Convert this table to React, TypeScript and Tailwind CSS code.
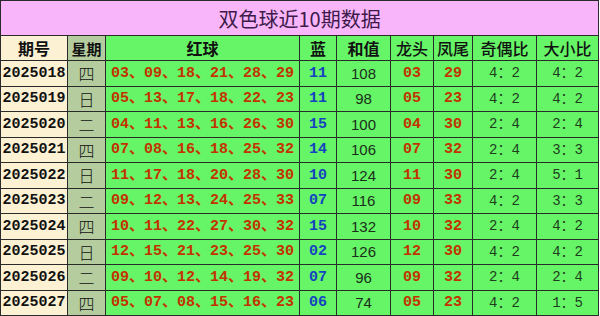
import React from "react";

type Row = {
  qi: string;
  day: string;
  red: string[];
  blue: string;
  sum: number;
  head: string;
  tail: string;
  oe: string;
  bs: string;
};

const rows: Row[] = [
  { qi: "2025018", day: "四", red: ["03", "09", "18", "21", "28", "29"], blue: "11", sum: 108, head: "03", tail: "29", oe: "4：2", bs: "4：2" },
  { qi: "2025019", day: "日", red: ["05", "13", "17", "18", "22", "23"], blue: "11", sum: 98, head: "05", tail: "23", oe: "4：2", bs: "4：2" },
  { qi: "2025020", day: "二", red: ["04", "11", "13", "16", "26", "30"], blue: "15", sum: 100, head: "04", tail: "30", oe: "2：4", bs: "2：4" },
  { qi: "2025021", day: "四", red: ["07", "08", "16", "18", "25", "32"], blue: "14", sum: 106, head: "07", tail: "32", oe: "2：4", bs: "3：3" },
  { qi: "2025022", day: "日", red: ["11", "17", "18", "20", "28", "30"], blue: "10", sum: 124, head: "11", tail: "30", oe: "2：4", bs: "5：1" },
  { qi: "2025023", day: "二", red: ["09", "12", "13", "24", "25", "33"], blue: "07", sum: 116, head: "09", tail: "33", oe: "4：2", bs: "3：3" },
  { qi: "2025024", day: "四", red: ["10", "11", "22", "27", "30", "32"], blue: "15", sum: 132, head: "10", tail: "32", oe: "2：4", bs: "4：2" },
  { qi: "2025025", day: "日", red: ["12", "15", "21", "23", "25", "30"], blue: "02", sum: 126, head: "12", tail: "30", oe: "4：2", bs: "4：2" },
  { qi: "2025026", day: "二", red: ["09", "10", "12", "14", "19", "32"], blue: "07", sum: 96, head: "09", tail: "32", oe: "2：4", bs: "2：4" },
  { qi: "2025027", day: "四", red: ["05", "07", "08", "15", "16", "23"], blue: "06", sum: 74, head: "05", tail: "23", oe: "4：2", bs: "1：5" },
];

const cjk = "font-['Noto_Sans_CJK_SC',sans-serif]";
const mono = "font-['Liberation_Mono','Noto_Sans_CJK_SC',monospace]";
const cell = "border border-[#2a2a2a] p-0 text-center align-middle";

export default function App() {
  return (
    <div className="w-[600px] h-[316px] bg-white">
      <table className="w-[599px] table-fixed border-collapse">
        <colgroup>
          <col className="w-[67px]" />
          <col className="w-[38px]" />
          <col className="w-[194px]" />
          <col className="w-[37px]" />
          <col className="w-[54px]" />
          <col className="w-[43px]" />
          <col className="w-[39px]" />
          <col className="w-[64px]" />
          <col className="w-[62px]" />
        </colgroup>
        <tbody>
          <tr className="h-[35px]">
            <td colSpan={9} className={`${cell} bg-[#f9b5f9] text-[20px] text-[#3d1a4a] ${cjk} leading-none pt-[2px]`}>
              双色球近10期数据
            </td>
          </tr>
          <tr className={`h-[25px] ${cjk} text-[16px] leading-none text-[#111]`}>
            <td className={`${cell} bg-[#fcf1d2] font-bold`}>期号</td>
            <td className={`${cell} bg-[#b5cc9e] font-bold text-[15px]`}>星期</td>
            <td className={`${cell} bg-[#66f566] font-bold`}>红球</td>
            <td className={`${cell} bg-[#66f566] font-bold`}>蓝</td>
            <td className={`${cell} bg-[#66f566] font-bold`}>和值</td>
            <td className={`${cell} bg-[#66f566] font-medium`}>龙头</td>
            <td className={`${cell} bg-[#66f566] font-medium`}>凤尾</td>
            <td className={`${cell} bg-[#66f566] font-medium`}>奇偶比</td>
            <td className={`${cell} bg-[#66f566] font-medium`}>大小比</td>
          </tr>
          {rows.map((r) => (
            <tr key={r.qi} className="h-[25.5px] leading-none">
              <td className={`${cell} bg-[#fcf1d2] ${mono} font-bold text-[15px] text-[#111]`}>{r.qi}</td>
              <td className={`${cell} bg-[#b5cc9e] ${cjk} font-light text-[16px] text-[#111]`}>{r.day}</td>
              <td className={`${cell} bg-[#66f566] ${mono} font-bold text-[15px] text-[#c23300]`}>
                {r.red.join("、")}
              </td>
              <td className={`${cell} bg-[#66f566] ${mono} font-bold text-[15px] text-[#1544c0]`}>{r.blue}</td>
              <td className={`${cell} bg-[#66f566] font-['Liberation_Sans',sans-serif] text-[15px] text-[#1b2e1b]`}>{r.sum}</td>
              <td className={`${cell} bg-[#66f566] ${mono} font-bold text-[15px] text-[#c23300]`}>{r.head}</td>
              <td className={`${cell} bg-[#66f566] ${mono} font-bold text-[15px] text-[#c23300]`}>{r.tail}</td>
              <td className={`${cell} bg-[#66f566] ${mono} text-[14px] text-[#1e3d1e]`}>{r.oe}</td>
              <td className={`${cell} bg-[#66f566] ${mono} text-[14px] text-[#1e3d1e]`}>{r.bs}</td>
            </tr>
          ))}
        </tbody>
      </table>
    </div>
  );
}
